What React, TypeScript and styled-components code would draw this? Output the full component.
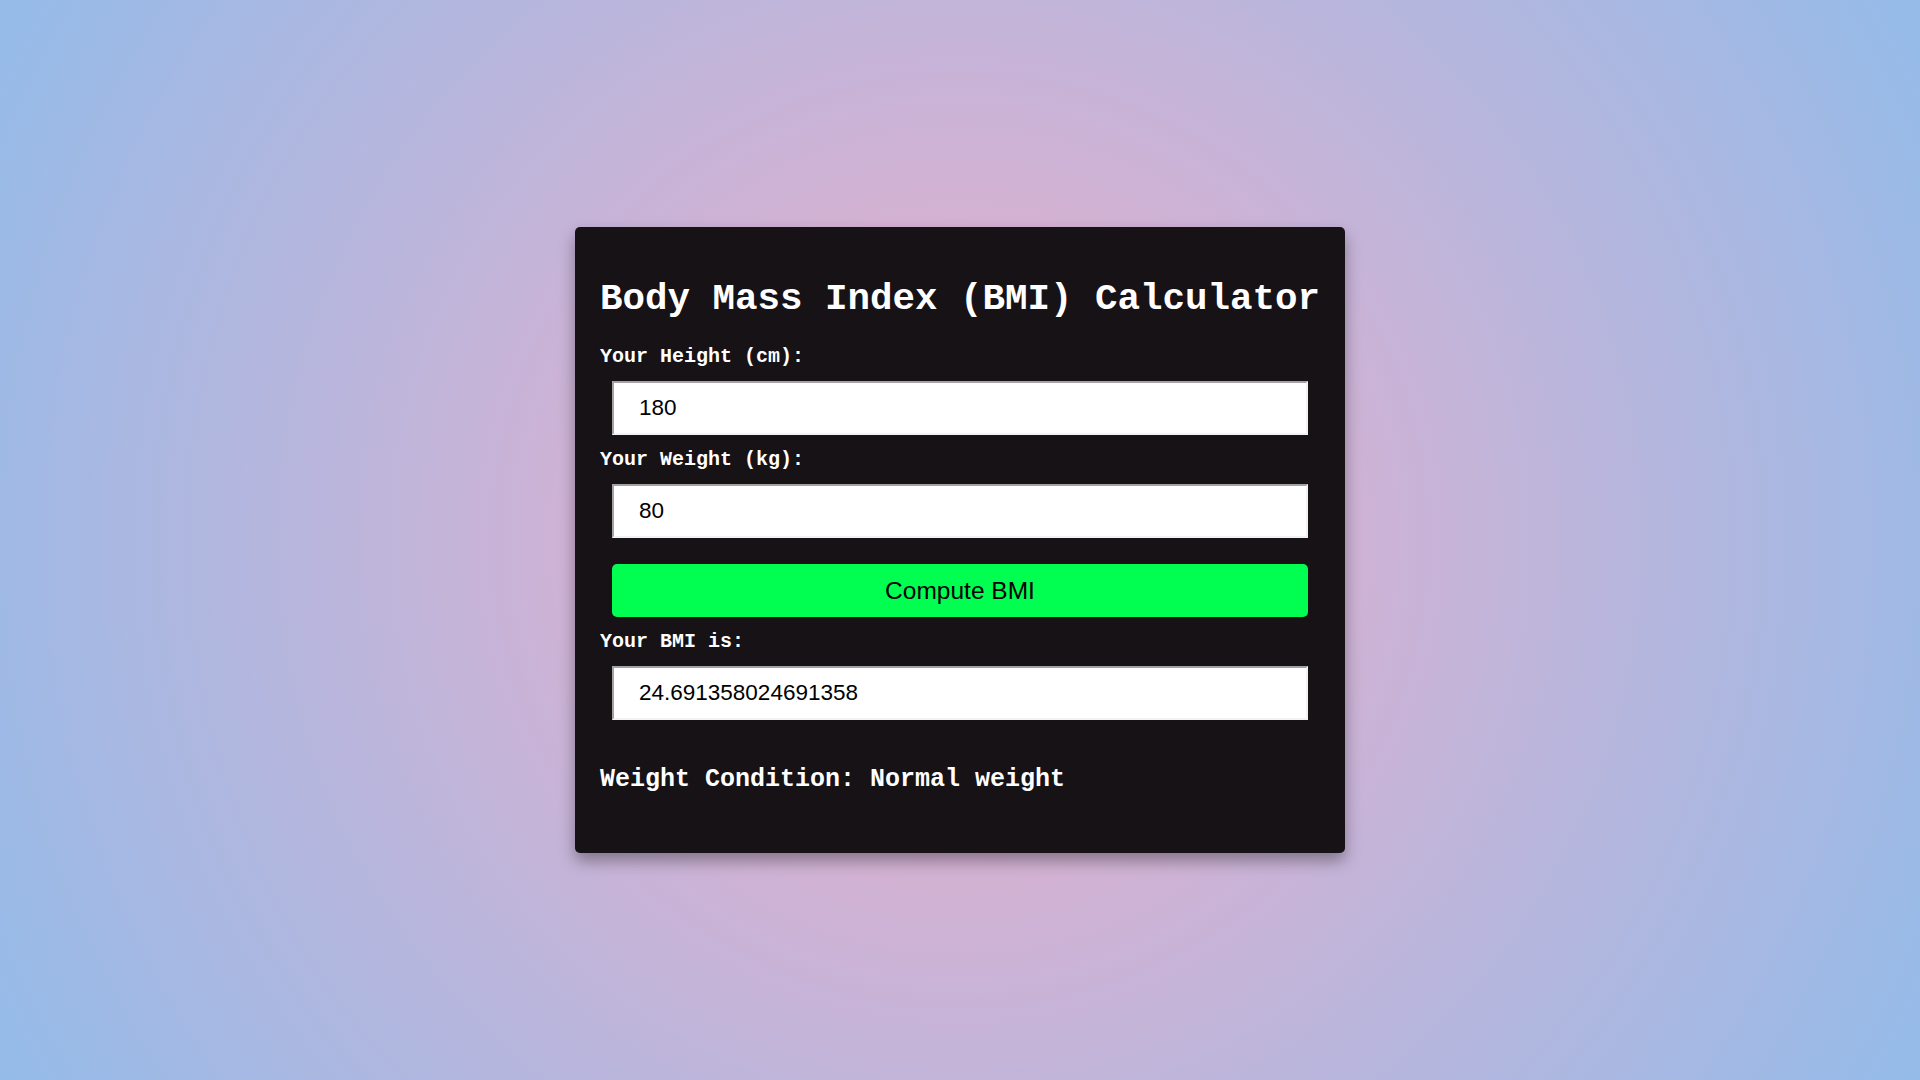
import React, { useState } from 'react';
import styled, { createGlobalStyle } from 'styled-components';

const GlobalStyle = createGlobalStyle`
  * {
    box-sizing: border-box;
  }

  body {
    margin: 0;
  }
`;

const mono = `"Courier New", Courier, "Liberation Mono", monospace`;
const sans = `"Liberation Sans", Arial, sans-serif`;

export const PageWrapper = styled.div`
  min-height: 100vh;
  display: flex;
  align-items: center;
  justify-content: center;
  background: radial-gradient(circle, #eeaeca 0%, #94bbe9 100%);
`;

export const CalculatorBox = styled.div`
  width: 770px;
  padding: 50px 20px 58px 25px;
  background-color: #161216;
  border-radius: 5px;
  box-shadow: 0 8px 16px rgba(0, 0, 0, 0.35);
  color: #ffffff;
  font-family: ${mono};
`;

export const Title = styled.h1`
  margin: 0 0 24px;
  font-size: 37.5px;
  line-height: 44px;
  font-weight: bold;
  white-space: nowrap;
`;

export const FieldLabel = styled.label`
  display: block;
  font-size: 20px;
  line-height: 24px;
  font-weight: bold;
`;

export const InputBox = styled.input`
  display: block;
  width: 696px;
  height: 54px;
  margin: 12px 0 13px 12px;
  padding: 0 25px;
  background-color: #ffffff;
  border-width: 2px;
  border-style: solid;
  border-color: #a3a3a3 #f2f2f2 #f2f2f2 #a3a3a3;
  color: #000000;
  font-family: ${sans};
  font-size: 22.5px;
  outline: none;
`;

export const ComputeButton = styled.button`
  display: block;
  width: 696px;
  height: 53px;
  margin: 26px 0 13px 12px;
  border: none;
  border-radius: 5px;
  background-color: #00ff50;
  color: #000000;
  font-family: ${sans};
  font-size: 24.5px;
  cursor: pointer;
`;

export const ConditionText = styled.p`
  margin: 45px 0 0;
  font-size: 25px;
  line-height: 30px;
  font-weight: bold;
`;

const getCondition = (bmi: number) => {
  if (bmi < 18.5) return 'Underweight';
  if (bmi < 25) return 'Normal weight';
  if (bmi < 30) return 'Overweight';
  return 'Obese';
};

export default function App() {
  const [height, setHeight] = useState('180');
  const [weight, setWeight] = useState('80');
  const [bmi, setBmi] = useState(80 / (1.8 * 1.8));

  const compute = () => {
    const h = parseFloat(height) / 100;
    const w = parseFloat(weight);
    if (h > 0 && w > 0) setBmi(w / (h * h));
  };

  return (
    <>
      <GlobalStyle />
      <PageWrapper>
        <CalculatorBox>
          <Title>Body Mass Index (BMI) Calculator</Title>
          <FieldLabel htmlFor="height">Your Height (cm):</FieldLabel>
          <InputBox id="height" value={height} onChange={(e) => setHeight(e.target.value)} />
          <FieldLabel htmlFor="weight">Your Weight (kg):</FieldLabel>
          <InputBox id="weight" value={weight} onChange={(e) => setWeight(e.target.value)} />
          <ComputeButton onClick={compute}>Compute BMI</ComputeButton>
          <FieldLabel htmlFor="bmi">Your BMI is:</FieldLabel>
          <InputBox id="bmi" value={String(bmi)} readOnly />
          <ConditionText>Weight Condition: {getCondition(bmi)}</ConditionText>
        </CalculatorBox>
      </PageWrapper>
    </>
  );
}
